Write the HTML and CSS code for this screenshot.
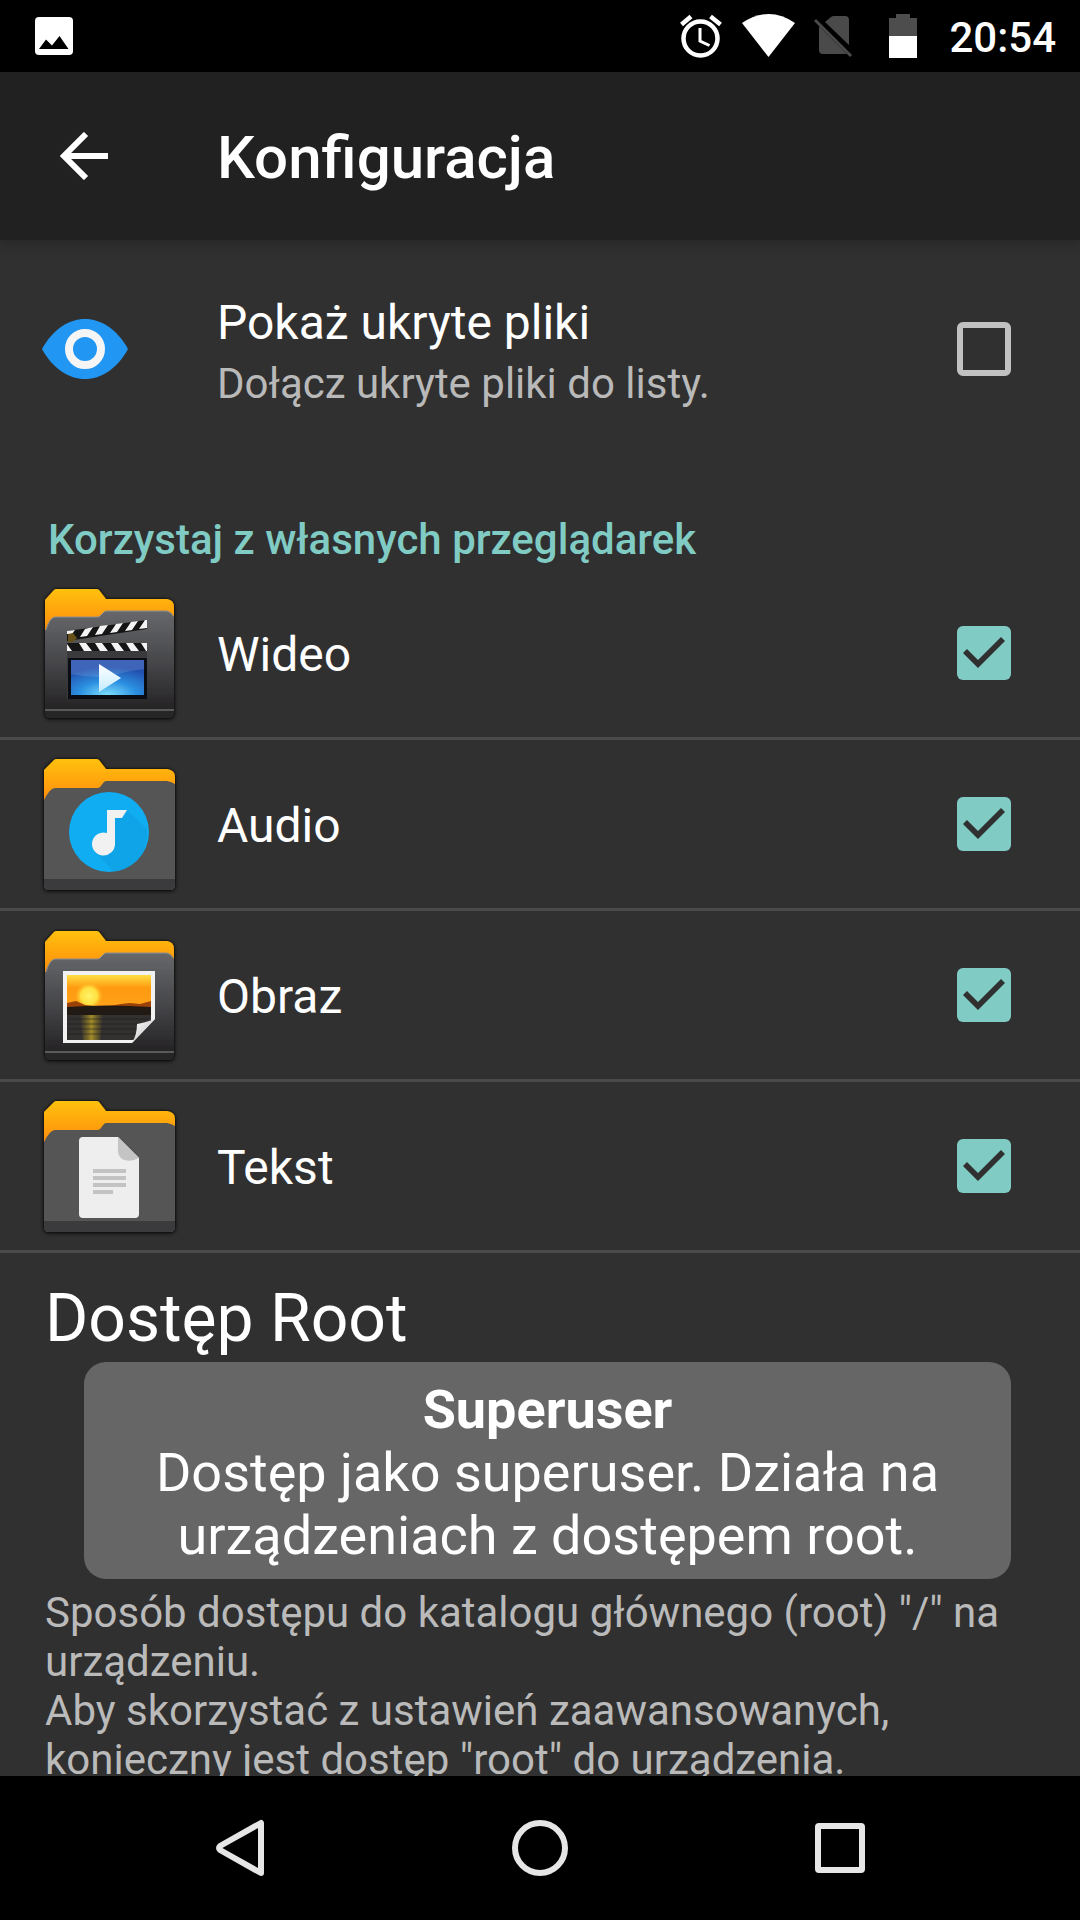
FILE: index.html
```html
<!DOCTYPE html>
<html lang="pl">
<head>
<meta charset="utf-8">
<meta name="viewport" content="width=device-width, initial-scale=1">
<title>Konfiguracja</title>
<link rel="stylesheet" href="styles.css">
</head>
<body>
<svg class="defs" width="0" height="0" aria-hidden="true">
  <defs>
    <linearGradient id="tab" x1="0" y1="0" x2="0" y2="1">
      <stop offset="0" stop-color="#ffc10c"/><stop offset="1" stop-color="#ff8a10"/>
    </linearGradient>
    <linearGradient id="steel" x1="0" y1="0" x2="0" y2="1">
      <stop offset="0" stop-color="#67686b"/><stop offset="0.5" stop-color="#444548"/><stop offset="1" stop-color="#1f1d1e"/>
    </linearGradient>
    <radialGradient id="screen" cx="0.5" cy="1" r="0.8">
      <stop offset="0" stop-color="#7fe0ff"/><stop offset="0.5" stop-color="#2a8fe0"/><stop offset="1" stop-color="#2450b0"/>
    </radialGradient>
    <linearGradient id="play" x1="0" y1="0" x2="0" y2="1">
      <stop offset="0" stop-color="#fff"/><stop offset="1" stop-color="#c4ecff"/>
    </linearGradient>
    <linearGradient id="sky" x1="0" y1="0" x2="0" y2="1">
      <stop offset="0" stop-color="#ffdf45"/><stop offset="0.4" stop-color="#ff9a10"/><stop offset="1" stop-color="#ffa21a"/>
    </linearGradient>
    <radialGradient id="sun">
      <stop offset="0" stop-color="#fff36a"/><stop offset="0.6" stop-color="#ffe040"/><stop offset="1" stop-color="#ffb020" stop-opacity="0"/>
    </radialGradient>
    <linearGradient id="glint" x1="0" y1="0" x2="1" y2="0">
      <stop offset="0" stop-color="#8a7420" stop-opacity="0"/><stop offset="0.5" stop-color="#a08a2a"/><stop offset="1" stop-color="#8a7420" stop-opacity="0"/>
    </linearGradient>
    <linearGradient id="curl" x1="0" y1="0" x2="1" y2="1">
      <stop offset="0" stop-color="#fff"/><stop offset="1" stop-color="#b8b8b8"/>
    </linearGradient>
    <filter id="halo" x="-10%" y="-10%" width="120%" height="120%">
      <feDropShadow dx="0" dy="0" stdDeviation="1" flood-color="#000" flood-opacity="0.7"/>
      <feDropShadow dx="0" dy="1" stdDeviation="2" flood-color="#000" flood-opacity="0.8"/>
    </filter>
    <symbol id="folder-steel" viewBox="0 0 144 144">
      <g filter="url(#halo)">
        <path fill="url(#tab)" d="M9 50V19L18 9Q19 8 21 8H60Q62 8 63 9L70 18H131Q138 19 138 26V50Z"/>
        <path fill="url(#steel)" d="M9 50Q14 36 19 36H61Q63 36 64 35L68 31Q69 30 71 30H131Q136 31 138 36V132Q138 137 133 137H14Q9 137 9 132Z"/>
      </g>
      <path fill="none" stroke="#8d8e90" stroke-width="1" d="M10 49Q14 36 19 36H61Q63 36 64 35L68 31Q69 30 71 30H131Q135 31 137 35"/>
      <path fill="#262626" d="M9 129H138V132Q138 137 133 137H14Q9 137 9 132Z"/>
      <path stroke="#5b5a5b" stroke-width="2" d="M9 129H138"/>
    </symbol>
    <symbol id="folder-flat" viewBox="0 0 144 144">
      <g filter="url(#halo)">
        <path fill="url(#tab)" d="M8 50V18L18 8Q19 7 21 7H60Q62 7 63 8L70 17H131Q139 18 139 25V50Z"/>
        <path fill="#555557" d="M8 48Q14 36 19 36H61Q63 36 64 35L68 30Q69 29 71 29H131Q136 30 139 32V133Q139 138 134 138H13Q8 138 8 133Z"/>
      </g>
      <path fill="#3b3b3d" d="M8 127H139V133Q139 138 134 138H13Q8 138 8 133Z"/>
    </symbol>
  </defs>
</svg>

<div class="statusbar">
  <svg class="notice" width="38" height="38" viewBox="0 0 38 38" aria-hidden="true">
    <rect width="38" height="38" rx="4" fill="#fff"/>
    <path d="M4 32L11 22.500L17 28.500L24.500 19L33.500 32Z"/>
  </svg>
  <svg width="44" height="44" viewBox="0 0 44 44" fill="none" stroke="#fff" aria-hidden="true">
    <circle cx="20.500" cy="24.500" r="17" stroke-width="4.500"/>
    <path stroke-width="4.500" d="M1.500 10.500L11 2.500M30.500 2.500L40.500 10.500"/>
    <path stroke-width="3" d="M20 14V27L29.500 31.500"/>
  </svg>
  <svg width="54" height="44" viewBox="0 0 54 44" aria-hidden="true"><path fill="#fff" d="M0 9Q27-9 53 9L26.500 43Z"/></svg>
  <svg width="57" height="44" viewBox="0 0 57 44" aria-hidden="true">
    <path fill="#4a4a4a" d="M11 8L17 3Q18 2 20 2H31Q35 2 35 6V31Z"/>
    <path fill="#4a4a4a" d="M5 12L33 40H9Q5 40 5 36Z"/>
    <path stroke="#4a4a4a" stroke-width="3" d="M1 6L37 42"/>
  </svg>
  <svg width="28" height="44" viewBox="0 0 28 44" aria-hidden="true">
    <path fill="#4d4d4d" d="M7 0H21V4H28V22H0V4H7Z"/><path fill="#fff" d="M0 22H28V44H0Z"/>
  </svg>
  <time class="clock">20:54</time>
</div>

<header class="toolbar">
  <button class="back" type="button" aria-label="Wstecz">
    <svg width="48" height="48" viewBox="0 0 48 48" fill="none" stroke="#fff" stroke-width="6" aria-hidden="true"><path d="M48 24H5M26 2L4 24L26 46"/></svg>
  </button>
  <h1 class="title">Konfiguracja</h1>
</header>

<main class="content">
  <label class="row row-hidden">
    <svg class="icon" width="144" height="144" viewBox="0 0 144 144" aria-hidden="true">
      <path fill="#2196f3" d="M6 72C28 32 70 32 92 72C70 112 28 112 6 72Z"/>
      <circle cx="49" cy="72" r="16" fill="none" stroke="#f5f5f5" stroke-width="8"/>
    </svg>
    <span class="text">
      <span class="name">Pokaż ukryte pliki</span>
      <span class="hint">Dołącz ukryte pliki do listy.</span>
    </span>
    <input class="check" type="checkbox">
  </label>

  <h2 class="section">Korzystaj z własnych przeglądarek</h2>

  <label class="row">
    <svg class="icon" width="144" height="144" viewBox="0 0 144 144" aria-hidden="true">
      <use href="#folder-steel"/>
      <path fill="#3a3a3c" d="M31 70H111V118H31Z"/>
      <path fill="#151515" d="M31 50L111 39V48L31 60ZM31 62H111V70H31Z"/>
      <path fill="#f4f4f4" d="M31 50L39 49L36 53L31 53ZM49 48L57 46L51 55L44 56ZM64 45L72 44L66 53L59 54ZM80 43L87 42L81 51L74 52ZM95 41L102 40L96 49L89 50ZM109 39H111V47L103 48Z"/>
      <path fill="#f4f4f4" d="M31 63L36 70H31ZM43 62H50L56 70H48ZM59 62H66L72 70H64ZM75 62H82L88 70H80ZM90 62H97L103 70H95ZM105 62H111V70H110Z"/>
      <path fill="#66501a" d="M32 53L37 52L41 57L37 61H32Z"/>
      <path fill="#0b0d14" d="M32 77H111V118H32Z"/>
      <path fill="url(#screen)" d="M35 79H108V114H35Z"/>
      <path fill="#fff" opacity="0.120" d="M35 79H108V88Q90 90 72 96Q54 97 35 93Z"/>
      <path fill="url(#play)" d="M63 83L85 97L63 111Z"/>
    </svg>
    <span class="text"><span class="name">Wideo</span></span>
    <input class="check" type="checkbox" checked>
  </label>

  <label class="row">
    <svg class="icon" width="144" height="144" viewBox="0 0 144 144" aria-hidden="true">
      <use href="#folder-flat"/>
      <circle cx="73" cy="80" r="40" fill="#10adf2"/>
      <path fill="#0b9bdc" opacity="0.500" d="M91 58L111 77Q112 102 94 114Q86 119 77 119L59 100L79 90V66Z"/>
      <path fill="#f1f1f1" d="M71 58H91L86 66H79V92A11.500 11.500 0 1 1 71 81Z"/>
    </svg>
    <span class="text"><span class="name">Audio</span></span>
    <input class="check" type="checkbox" checked>
  </label>

  <label class="row">
    <svg class="icon" width="144" height="144" viewBox="0 0 144 144" aria-hidden="true">
      <use href="#folder-steel"/>
      <path fill="#f2f2f2" d="M27 48H119V96L96 120H27Z"/>
      <path fill="url(#sky)" d="M31 52H115V84H31Z"/>
      <circle cx="53" cy="73" r="14" fill="url(#sun)"/>
      <path fill="#9a4208" d="M31 80L40 78L49 82L66 84L85 81L94 80L104 81L115 78V87H31Z"/>
      <path fill="#201914" d="M31 84Q70 81 115 84V98L97 117H31Z"/>
      <path fill="#333130" d="M31 92H115V98L97 117H31Z"/>
      <path fill="url(#glint)" d="M44 92H67L64 117H47Z"/>
      <path stroke="#151515" opacity="0.500" d="M31 96H113M31 101H108M31 106H104M31 111H100"/>
      <path fill="url(#curl)" d="M119 96Q108 100 101 101Q101 112 96 120Z"/>
    </svg>
    <span class="text"><span class="name">Obraz</span></span>
    <input class="check" type="checkbox" checked>
  </label>

  <label class="row">
    <svg class="icon" width="144" height="144" viewBox="0 0 144 144" aria-hidden="true">
      <use href="#folder-flat"/>
      <path fill="#eee" d="M47 43H82L103 64V120Q103 124 99 124H47Q43 124 43 120V47Q43 43 47 43Z"/>
      <path fill="#c4c4c4" d="M82 43L103 64Q93 69 86 65Q81 61 82 54Z"/>
      <path stroke="#c3c3c3" stroke-width="4" d="M57 77H90M57 84H90M57 91H90M57 98H77"/>
    </svg>
    <span class="text"><span class="name">Tekst</span></span>
    <input class="check" type="checkbox" checked>
  </label>

  <section class="root">
    <h2 class="root-title">Dostęp Root</h2>
    <p class="root-text">Sposób dostępu do katalogu głównego (root) "/" na urządzeniu.<br>Aby skorzystać z ustawień zaawansowanych, konieczny jest dostęp "root" do urządzenia.</p>
  </section>
</main>

<nav class="navbar">
  <button type="button" aria-label="Cofnij"><svg width="60" height="60" viewBox="0 0 60 60" aria-hidden="true"><path d="M51 5V55L10 32Q8 30 10 28Z"/></svg></button>
  <button type="button" aria-label="Ekran główny"><svg width="60" height="60" viewBox="0 0 60 60" aria-hidden="true"><circle cx="30" cy="30" r="25"/></svg></button>
  <button type="button" aria-label="Ostatnie"><svg width="60" height="60" viewBox="0 0 60 60" aria-hidden="true"><rect x="8" y="8" width="44" height="44" rx="1"/></svg></button>
</nav>

<div class="toast" role="status"><strong>Superuser</strong><br>Dostęp jako superuser. Działa na urządzeniach z dostępem root.</div>
</body>
</html>
```
FILE: styles.css
```css
* {
  box-sizing: border-box;
}

body {
  margin: 0;
  height: 100vh;
  display: flex;
  flex-direction: column;
  position: relative;
  overflow: hidden;
  background: #303030;
  color: #fff;
  font-family: Roboto, "Noto Sans", sans-serif;
}

h1, h2, p {
  margin: 0;
}

button {
  border: 0;
  padding: 0;
  background: none;
  color: inherit;
  display: flex;
  align-items: center;
  justify-content: center;
}

.defs {
  position: absolute;
}

.statusbar {
  flex: none;
  height: 72px;
  padding: 0 24px 0 35px;
  display: flex;
  align-items: center;
  gap: 18px;
  background: #000;
}

.notice {
  margin-right: auto;
}

.clock {
  margin-left: 14px;
  padding-top: 2px;
  font-size: 42px;
  line-height: 49px;
  font-weight: 500;
}

.toolbar {
  flex: none;
  height: 168px;
  display: grid;
  grid-template-columns: 217px 1fr;
  align-items: center;
  background: #212121;
  box-shadow: 0 4px 12px rgba(0, 0, 0, 0.2);
  z-index: 1;
}

.back {
  width: 168px;
  height: 168px;
}

.title {
  padding-top: 4px;
  font-size: 60px;
  line-height: 70px;
  font-weight: 500;
}

.content {
  flex: 1;
  min-height: 0;
  overflow: hidden;
}

.row {
  height: 171px;
  padding: 0 69px 0 36px;
  display: grid;
  grid-template-columns: 181px 1fr 54px;
  align-items: center;
  border-bottom: 3px solid #4a4a4a;
}

.row-hidden {
  height: 218px;
  border-bottom: 0;
}

.text {
  padding-top: 4px;
  display: flex;
  flex-direction: column;
  gap: 8px;
}

.name {
  font-size: 48px;
  line-height: 56px;
}

.hint {
  color: #b9b9b9;
  font-size: 42px;
  line-height: 49px;
}

.check {
  appearance: none;
  width: 54px;
  height: 54px;
  margin: 0;
  border: 6px solid #c1c1c1;
  border-radius: 6px;
}

.check:checked {
  border: 0;
  background: #80cbc4;
}

.check:checked::after {
  content: "";
  display: block;
  height: 54px;
  background: #303030;
  clip-path: polygon(6px 27px, 10px 23px, 21px 34px, 44px 11px, 48px 15px, 21px 42px);
}

.section {
  padding: 57px 48px 5px;
  color: #80cbc4;
  font-size: 42px;
  line-height: 49px;
  font-weight: 500;
}

.root {
  padding: 27px 45px 0;
}

.root-title {
  margin-bottom: 231px;
  font-size: 66px;
  line-height: 77px;
  font-weight: 400;
}

.root-text {
  color: #bababa;
  font-size: 42px;
  line-height: 49px;
}

.navbar {
  flex: none;
  height: 144px;
  padding: 0 90px;
  display: grid;
  grid-template-columns: repeat(3, 1fr);
  background: #000;
}

.navbar svg {
  fill: none;
  stroke: #e6e6e6;
  stroke-width: 6px;
  stroke-linejoin: round;
}

.toast {
  position: absolute;
  left: 84px;
  right: 69px;
  bottom: 341px;
  padding: 16px 60px 12px;
  border-radius: 22px;
  background: #666;
  font-size: 54px;
  line-height: 63px;
  text-align: center;
}

.toast strong {
  font-weight: 700;
}
```
